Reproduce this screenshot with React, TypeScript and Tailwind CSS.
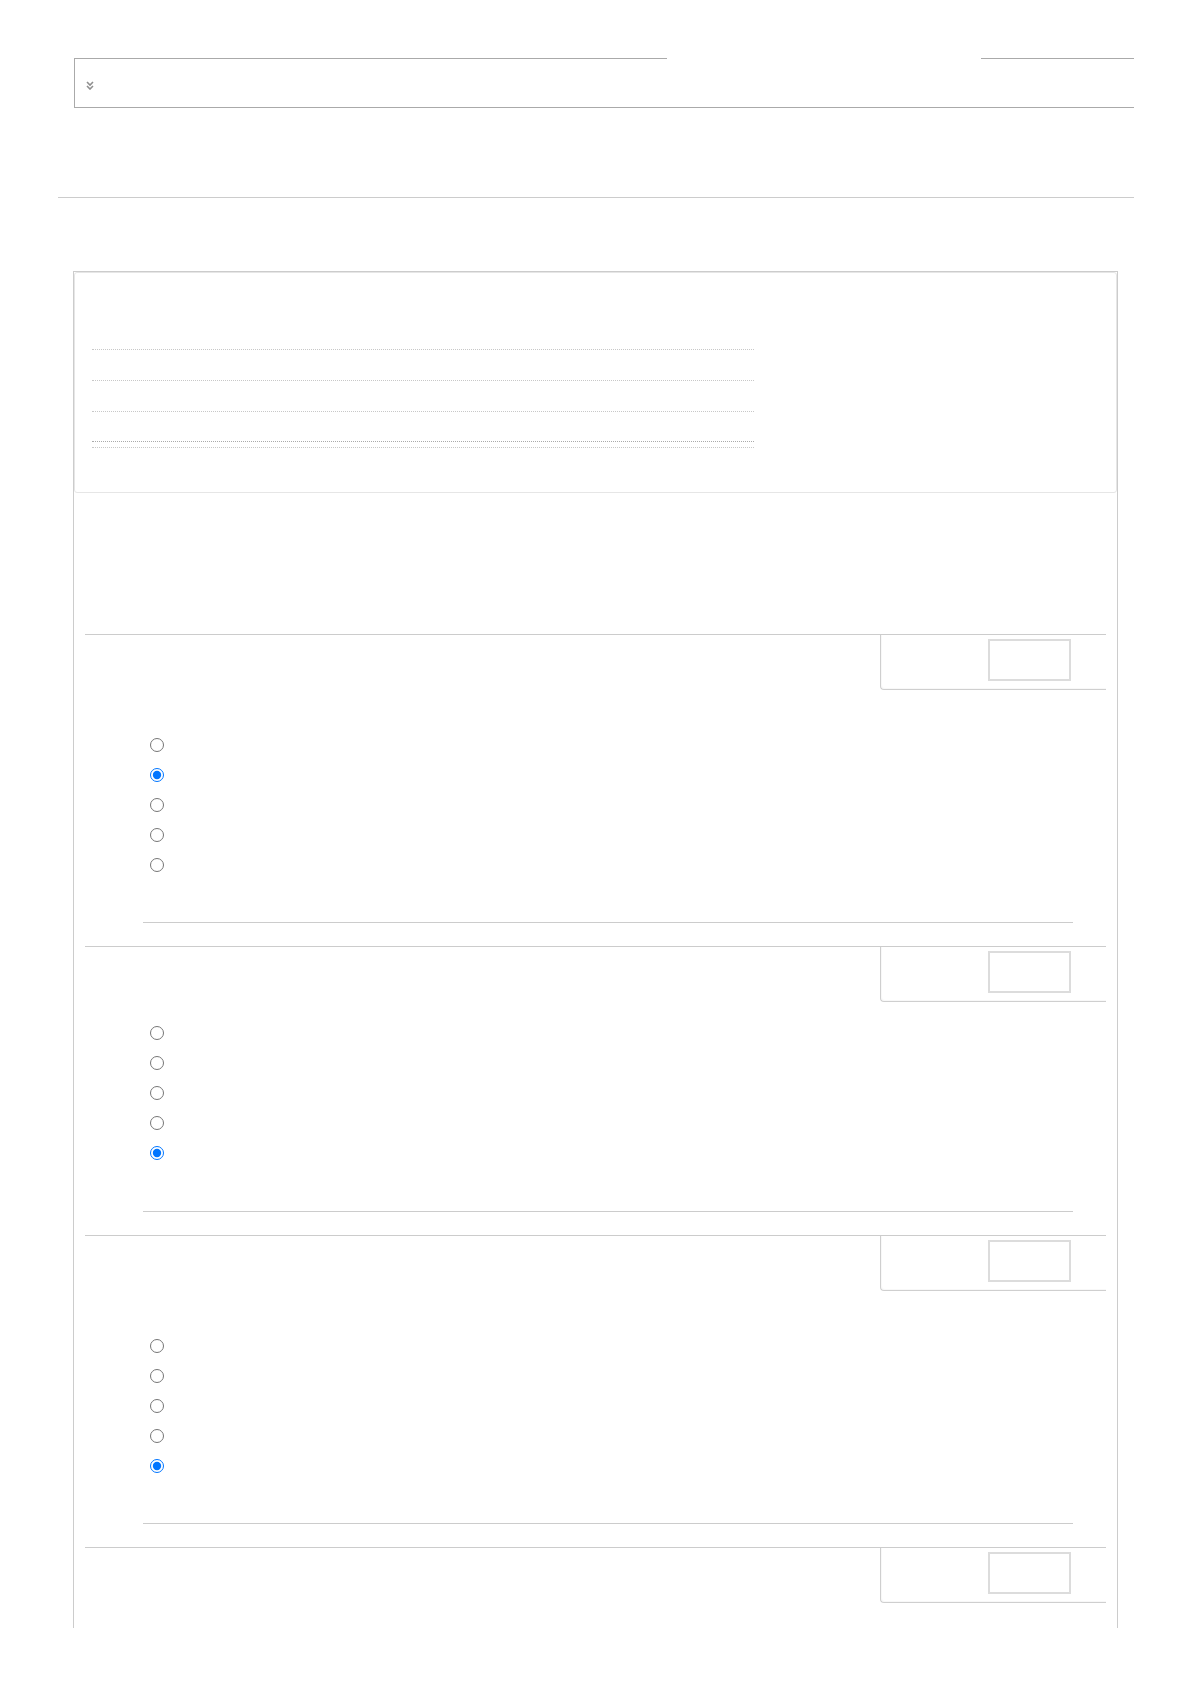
import React from "react";

const Radio = ({ name, checked }: { name: string; checked: boolean }) => (
  <div className="h-[30px] flex items-center">
    <input
      type="radio"
      name={name}
      defaultChecked={checked}
      className="w-[14px] h-[14px] m-0"
    />
  </div>
);

const Section = ({
  id,
  pt,
  checkedIndex,
  mt,
}: {
  id: string;
  pt: "tall" | "short";
  checkedIndex: number;
  mt: "a" | "b";
}) => (
  <div className="border-t border-[#cccccc]">
    <div className="flex">
      <div className={pt === "tall" ? "flex-1 pt-[95px] pl-[65px]" : "flex-1 pt-[71px] pl-[65px]"}>
        {[0, 1, 2, 3, 4].map((i) => (
          <Radio key={i} name={id} checked={i === checkedIndex} />
        ))}
      </div>
      <div className="w-[226px] h-[55px] border-l border-b border-[#cfcfcf] rounded-bl-[4px] pl-[107px] pt-[4px] shadow-[inset_1px_-1px_1px_rgba(0,0,0,0.03)]">
        <div className="w-[83px] h-[42px] border-2 border-[#dcdcdc] bg-white" />
      </div>
    </div>
    <div
      className={
        mt === "a"
          ? "ml-[58px] w-[930px] border-t border-[#cccccc] mt-[42px] mb-[23px]"
          : "ml-[58px] w-[930px] border-t border-[#cccccc] mt-[43px] mb-[23px]"
      }
    />
  </div>
);

export default function App() {
  return (
    <div className="bg-white min-h-[1684px] font-['Liberation_Sans',Arial,sans-serif] pt-[58px] pl-[58px] pr-[56px]">
      {/* Top collapsible box */}
      <div className="ml-[16px]">
        <div className="flex h-px">
          <div className="w-[593px] bg-[#aaaaaa]" />
          <div className="flex-1" />
          <div className="w-[153px] bg-[#aaaaaa]" />
        </div>
        <div className="border-l border-b border-[#aaaaaa] h-[49px] pl-[11px] pt-[22px]">
          <svg width="8" height="9" viewBox="0 0 8 9" fill="none" stroke="#8f8f8f" strokeWidth="1.6">
            <polyline points="1,1 4,4 7,1" />
            <polyline points="1,5 4,8 7,5" />
          </svg>
        </div>
      </div>

      {/* Rule */}
      <div className="mt-[89px] border-t border-[#cccccc]" />

      {/* Card */}
      <div className="mt-[73px] ml-[15px] mr-[16px] h-[1357px] overflow-hidden border-t border-l border-r border-[#cccccc]">
        <div className="border border-[#e6e6e6] rounded-[3px] h-[221px] pl-[17px]">
          <div className="w-[662px]">
            <div className="h-[77px] border-b border-dotted border-[#c8c8c8]" />
            <div className="h-[31px] border-b border-dotted border-[#c8c8c8]" />
            <div className="h-[31px] border-b border-dotted border-[#c8c8c8]" />
            <div className="h-[30px] border-b border-dotted border-[#aaaaaa]" />
            <div className="h-[6px] border-b border-dotted border-[#c8c8c8]" />
          </div>
        </div>

        <div className="mt-[141px] mx-[11px]">
          <Section id="q1" pt="tall" checkedIndex={1} mt="a" />
          <Section id="q2" pt="short" checkedIndex={4} mt="b" />
          <Section id="q3" pt="tall" checkedIndex={4} mt="a" />
          <Section id="q4" pt="tall" checkedIndex={-1} mt="a" />
        </div>
      </div>
    </div>
  );
}
